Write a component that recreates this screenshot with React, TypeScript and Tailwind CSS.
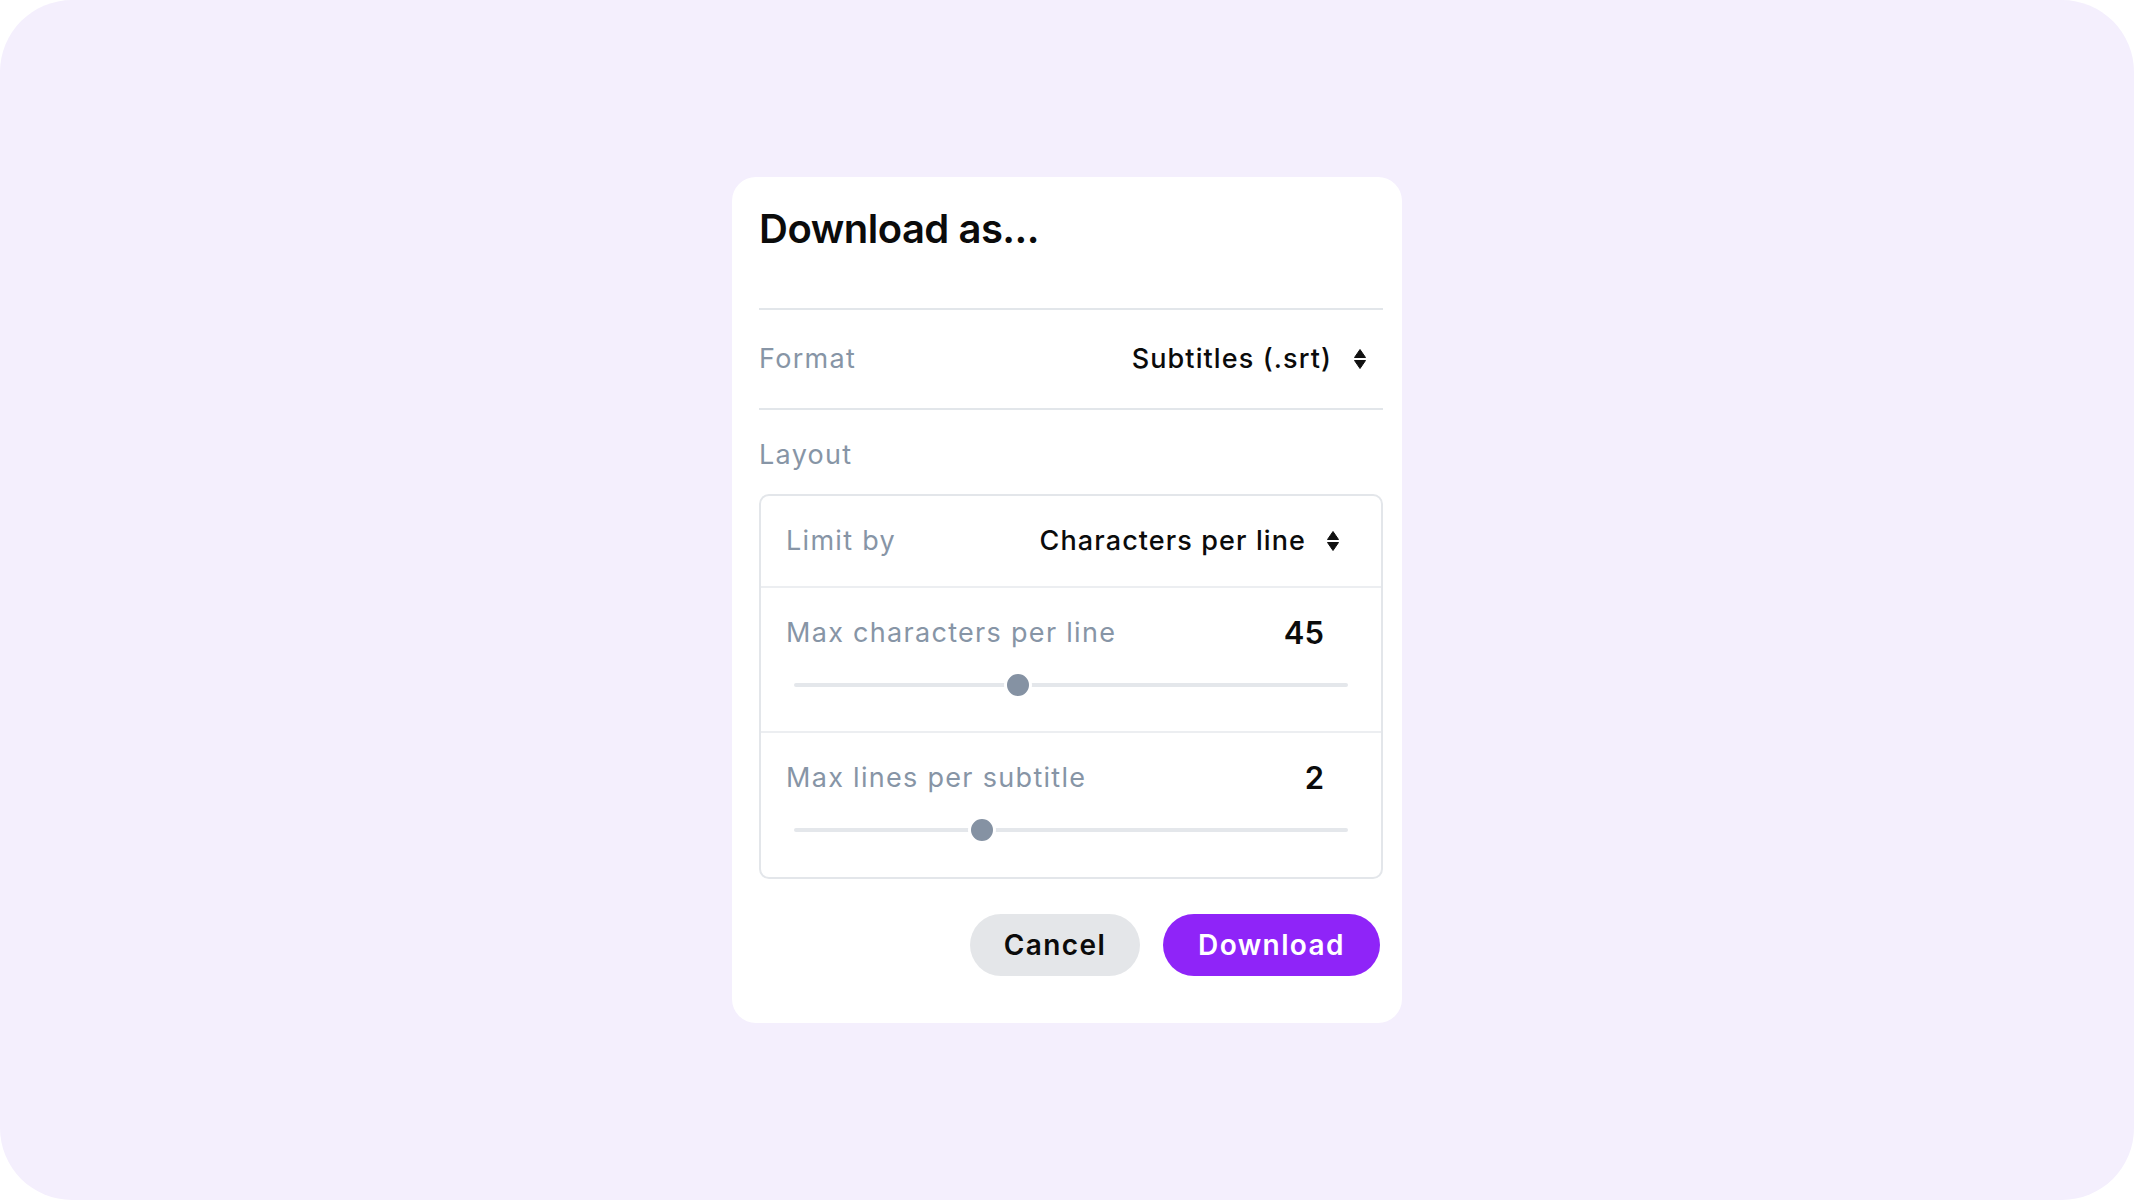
import React from 'react'

const font = { fontFamily: 'Inter, "Noto Sans", sans-serif' }

function SortIcon() {
  return (
    <svg width="12" height="20" viewBox="0 0 12 20" className="shrink-0">
      <path d="M6 0.5 L11.5 8.5 H0.5 Z" fill="#111" strokeLinejoin="round" stroke="#111" strokeWidth="1" />
      <path d="M0.5 11.5 H11.5 L6 19.5 Z" fill="#111" strokeLinejoin="round" stroke="#111" strokeWidth="1" />
    </svg>
  )
}

function Slider({ pct }: { pct: number }) {
  return (
    <div className="mx-[33px] mt-[34px] relative h-[4px] rounded-full bg-[#e4e7eb]">
      <div
        className="absolute top-1/2 -translate-x-1/2 -translate-y-1/2 w-[28px] h-[28px] rounded-full bg-[#8592a3] border-[3px] border-white"
        style={{ left: `${pct}%` }}
      />
    </div>
  )
}

function SliderRow({ label, value, pct, last }: { label: string; value: string; pct: number; last?: boolean }) {
  return (
    <div className={`pt-[29px] ${last ? 'h-[144px]' : 'h-[145px] border-b-2 border-[#eceef1]'}`}>
      <div className="flex items-center justify-between pl-[25px] pr-[57px]">
        <span className="text-[27px] leading-[32px] tracking-[1.3px] text-[#8795a6]">{label}</span>
        <span className="text-[31px] leading-[32px] font-semibold text-[#0b0b0b]">{value}</span>
      </div>
      <Slider pct={pct} />
    </div>
  )
}

export default function App() {
  return (
    <div className="h-[1200px] w-full bg-white" style={font}>
      <div className="h-full rounded-[72px] bg-[#f4effd] flex items-center justify-center">
        <div className="w-[670px] bg-white rounded-[24px] pl-[27px] pr-[19px] pt-[28px] pb-[47px]">
          <h1 className="text-[40px] leading-[48px] font-semibold tracking-[-0.5px] text-[#0b0b0b]">Download as...</h1>

          {/* Format */}
          <div className="mt-[55px] border-t-2 border-b-2 border-[#e2e6ea] h-[102px] flex items-center justify-between pr-[17px]">
            <span className="text-[27px] leading-[32px] tracking-[1.3px] text-[#8795a6]">Format</span>
            <div className="flex items-center gap-[22px]">
              <span className="text-[27px] leading-[32px] tracking-[1.1px] font-medium text-[#0b0b0b]">Subtitles (.srt)</span>
              <SortIcon />
            </div>
          </div>

          {/* Layout */}
          <div className="mt-[29px] text-[27px] leading-[32px] tracking-[1.3px] text-[#8795a6]">Layout</div>
          <div className="mt-[23px] border-2 border-[#e3e6ea] rounded-[10px]">
            <div className="h-[92px] flex items-center justify-between pl-[25px] pr-[42px] border-b-2 border-[#eceef1]">
              <span className="text-[27px] leading-[32px] tracking-[1.3px] text-[#8795a6]">Limit by</span>
              <div className="flex items-center gap-[21px]">
                <span className="text-[27px] leading-[32px] tracking-[1.1px] font-medium text-[#0b0b0b]">Characters per line</span>
                <SortIcon />
              </div>
            </div>
            <SliderRow label="Max characters per line" value="45" pct={40.5} />
            <SliderRow label="Max lines per subtitle" value="2" pct={34} last />
          </div>

          {/* Actions */}
          <div className="mt-[35px] flex justify-end gap-[23px] pr-[3px]">
            <button className="w-[170px] h-[62px] rounded-full bg-[#e4e6e9] text-[28px] tracking-[1.4px] font-semibold text-[#0b0b0b]">Cancel</button>
            <button className="w-[217px] h-[62px] rounded-full bg-[#8f24f8] text-[28px] tracking-[1.4px] font-semibold text-white">Download</button>
          </div>
        </div>
      </div>
    </div>
  )
}
